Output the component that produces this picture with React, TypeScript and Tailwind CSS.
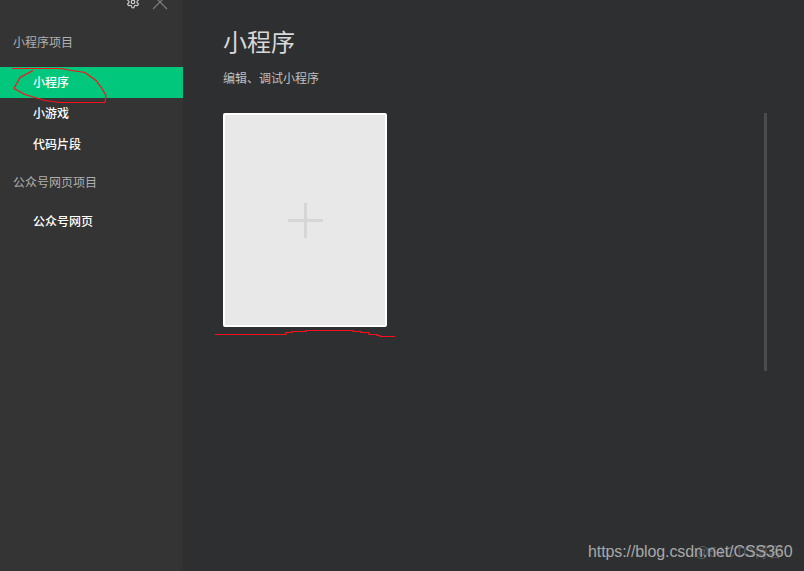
const font = 'font-["Liberation_Sans","Noto_Sans_CJK_SC",sans-serif]'

function NavItem({ label, active }: { label: string; active?: boolean }) {
  return (
    <div
      className={`flex h-[31px] items-center pl-[33px] text-[12px] font-medium text-white ${
        active ? 'bg-[#00c77b]' : ''
      }`}
    >
      {label}
    </div>
  )
}

function Gear() {
  return (
    <svg width="14" height="14" viewBox="0 0 24 24" fill="none" stroke="#d0d0d0" strokeWidth="2" className="-mt-[5px]">
      <path d="M12.22 2h-.44a2 2 0 0 0-2 2v.18a2 2 0 0 1-1 1.73l-.43.25a2 2 0 0 1-2 0l-.15-.08a2 2 0 0 0-2.73.73l-.22.38a2 2 0 0 0 .73 2.73l.15.1a2 2 0 0 1 1 1.72v.51a2 2 0 0 1-1 1.74l-.15.09a2 2 0 0 0-.73 2.73l.22.38a2 2 0 0 0 2.73.73l.15-.08a2 2 0 0 1 2 0l.43.25a2 2 0 0 1 1 1.73V20a2 2 0 0 0 2 2h.44a2 2 0 0 0 2-2v-.18a2 2 0 0 1 1-1.73l.43-.25a2 2 0 0 1 2 0l.15.08a2 2 0 0 0 2.73-.73l.22-.39a2 2 0 0 0-.73-2.73l-.15-.08a2 2 0 0 1-1-1.74v-.5a2 2 0 0 1 1-1.74l.15-.09a2 2 0 0 0 .73-2.73l-.22-.38a2 2 0 0 0-2.73-.73l-.15.08a2 2 0 0 1-2 0l-.43-.25a2 2 0 0 1-1-1.73V4a2 2 0 0 0-2-2z" />
      <circle cx="12" cy="12" r="3" />
    </svg>
  )
}

function Close() {
  return (
    <svg width="16" height="16" viewBox="0 0 16 16" fill="none" stroke="#7c7c7c" strokeWidth="1.2" className="-mt-[6px]">
      <path d="M1 1l14 14M15 1L1 15" />
    </svg>
  )
}

export default function App() {
  return (
    <div className={`relative flex h-[571px] w-[804px] overflow-hidden bg-[#2e2f31] ${font}`}>
      <aside className="w-[183px] shrink-0 bg-[#343434]">
        <div className="flex h-[10px] items-start justify-end gap-[12px] overflow-hidden pr-[15px]">
          <Gear />
          <Close />
        </div>
        <div className="mt-[26px] pl-[13px] text-[12px] leading-[15px] text-[#b0b0b0]">小程序项目</div>
        <div className="mt-[16px]">
          <NavItem label="小程序" active />
          <NavItem label="小游戏" />
          <NavItem label="代码片段" />
        </div>
        <div className="mt-[16px] pl-[13px] text-[12px] leading-[15px] text-[#b0b0b0]">公众号网页项目</div>
        <div className="mt-[15px]">
          <NavItem label="公众号网页" />
        </div>
      </aside>

      <main className="flex flex-1 pl-[40px]">
        <div className="w-[541px]">
          <h1 className="mt-[27px] text-[24px] leading-[32px] font-normal text-[#d8d8d8]">小程序</h1>
          <p className="mt-[13px] text-[12px] leading-[15px] text-[#c0c0c0]">编辑、调试小程序</p>
          <button className="mt-[26px] flex h-[214px] w-[164px] items-center justify-center rounded-[2px] border-2 border-white bg-[#e8e8e8]">
            <svg width="35" height="35" viewBox="0 0 35 35" fill="#d6d6d6">
              <rect x="16" width="3" height="35" />
              <rect y="16" width="35" height="3" />
            </svg>
          </button>
        </div>
        <div className="mt-[113px] h-[258px] w-[3px] bg-[#4c4c4c]" />
      </main>

      {/* hand-drawn red marks and watermark on top of the screenshot */}
      <svg width="804" height="571" fill="none" stroke="#ff0f1a" strokeWidth="1.2" className="pointer-events-none absolute top-0 left-0">
        <path d="M12 68.5H60L72 70.5L85 72.5L96 80.5L102 88.5L106 95.5L105 102.5H60L45 100.5L25 94.5L14 88.5L20 77.5L33 70.5" />
        <path d="M215 334.5H286V332.5H292V331.5H306V330.5H353V331.5H361V332.5H369V334.5H377V335.5H380V336.5H395" />
      </svg>
      <div className="absolute top-[543px] left-[695px] text-[14px] leading-[18px] whitespace-nowrap text-[#5a5a5a]">
        @51CTO博客
      </div>
      <div className="absolute top-[543px] left-[588px] font-['Liberation_Sans',sans-serif] text-[16px] leading-[18px] tracking-[-0.1px] whitespace-nowrap text-[#a8a8a8]">
        https://blog.csdn.net/CSS360
      </div>
    </div>
  )
}
